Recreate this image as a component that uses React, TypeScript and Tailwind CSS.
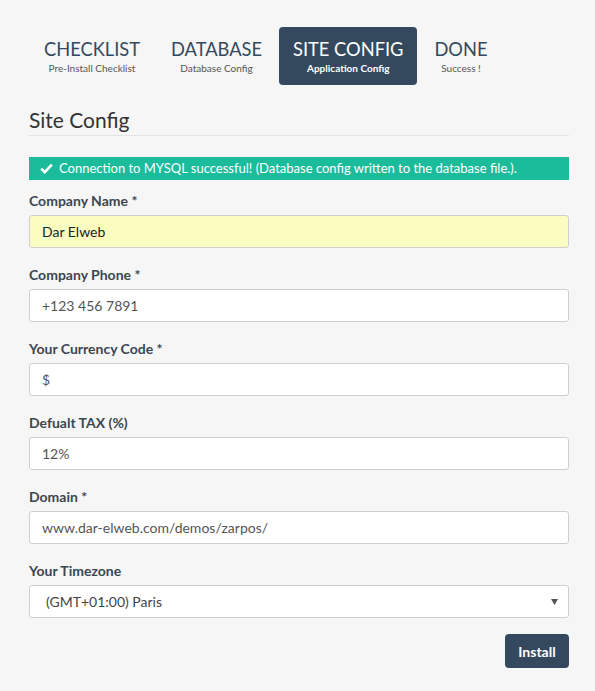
import React from "react";

type Step = {
  title: string;
  sub: string;
  active?: boolean;
};

const steps: Step[] = [
  { title: "CHECKLIST", sub: "Pre-Install Checklist" },
  { title: "DATABASE", sub: "Database Config" },
  { title: "SITE CONFIG", sub: "Application Config", active: true },
  { title: "DONE", sub: "Success !" },
];

type Field = {
  label: string;
  value: string;
  autofill?: boolean;
  dark?: boolean;
};

const fields: Field[] = [
  { label: "Company Name *", value: "Dar Elweb", autofill: true, dark: true },
  { label: "Company Phone *", value: "+123 456 7891" },
  { label: "Your Currency Code *", value: "$" },
  { label: "Defualt TAX (%)", value: "12%" },
  { label: "Domain *", value: "www.dar-elweb.com/demos/zarpos/" },
];

const App = () => {
  return (
    <div
      className="min-h-[691px] w-full bg-[#f6f6f6] pl-[29px] pt-[27px] pb-[23px]"
      style={{ fontFamily: "Lato, 'Open Sans', sans-serif" }}
    >
      <div className="w-[540px]">
        {/* Steps */}
        <div className="flex gap-[3px] pl-[1px]">
          {steps.map((step) => (
            <div
              key={step.title}
              className={`flex flex-col items-center rounded-[4px] px-[14px] pt-[12px] pb-[10px] ${
                step.active ? "bg-[#34495e] text-white" : "text-[#34495e]"
              }`}
            >
              <span className="text-[18.3px] leading-[20px]">{step.title}</span>
              <span
                className={`mt-[2px] text-[10px] leading-[14px] ${
                  step.active ? "font-bold text-white" : "text-[#555]"
                }`}
              >
                {step.sub}
              </span>
            </div>
          ))}
        </div>

        {/* Heading */}
        <h2 className="mt-[23px] border-b border-[#e3e3e3] pb-[3px] text-[21px] leading-[24px] text-[#333]">
          Site Config
        </h2>

        {/* Alert */}
        <div className="mt-[21px] flex h-[23px] items-center bg-[#1abc9c] pl-[11px] text-[13px] text-white">
          <svg width="13" height="11" viewBox="0 0 13 11" className="mr-[6px]">
            <path d="M1.2 5.8 L4.8 9.2 L11.8 1.6" fill="none" stroke="white" strokeWidth="2.6" />
          </svg>
          <span>Connection to MYSQL successful! (Database config written to the database file.).</span>
        </div>

        {/* Form */}
        <div className="mt-[11px] flex flex-col">
          {fields.map((f) => (
            <div key={f.label} className="mb-[17px] flex flex-col">
              <label className="mb-[5px] text-[14px] font-bold leading-[19px] text-[#3c4650]">
                {f.label}
              </label>
              <div
                className={`flex h-[33px] items-center rounded-[3px] border border-[#cfcfcf] px-[12px] text-[14px] ${
                  f.autofill ? "bg-[#fafcc0]" : "bg-white"
                } ${f.dark ? "text-[#222]" : "text-[#555]"}`}
              >
                {f.value}
              </div>
            </div>
          ))}

          <div className="flex flex-col">
            <label className="mb-[5px] text-[14px] font-bold leading-[19px] text-[#3c4650]">
              Your Timezone
            </label>
            <div className="flex h-[33px] items-center justify-between rounded-[3px] border border-[#cfcfcf] bg-white pl-[16px] pr-[10px] text-[14px] text-[#444]">
              <span>(GMT+01:00) Paris</span>
              <svg width="7" height="6" viewBox="0 0 7 6">
                <path d="M0 0 H7 L3.5 6 Z" fill="#555" />
              </svg>
            </div>
          </div>

          <div className="mt-[16px] flex justify-end">
            <button className="h-[34px] w-[64px] rounded-[4px] bg-[#34495e] text-[14px] font-bold text-white">
              Install
            </button>
          </div>
        </div>
      </div>
    </div>
  );
};

export default App;
